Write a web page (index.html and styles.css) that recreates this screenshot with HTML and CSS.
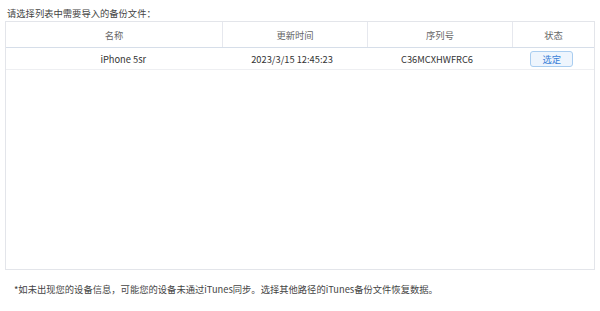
FILE: index.html
```html
<!DOCTYPE html>
<html lang="zh-CN">
<head>
  <meta charset="UTF-8">
  <title>选择备份文件</title>
  <meta name="viewport" content="width=device-width, initial-scale=1.0">
  <link rel="stylesheet" href="styles.css">
</head>
<body>
  <div class="container">
    <div class="title">请选择列表中需要导入的备份文件：</div>

    <div class="panel">
      <table class="backup-table">
        <thead>
          <tr>
            <th class="col-name">名称</th>
            <th class="col-time">更新时间</th>
            <th class="col-serial">序列号</th>
            <th class="col-state">状态</th>
          </tr>
        </thead>
        <tbody>
          <tr>
            <td class="cell-name">iPhone 5sr</td>
            <td class="cell-time">2023/3/15 12:45:23</td>
            <td class="cell-serial">C36MCXHWFRC6</td>
            <td><button class="pick-btn">选定</button></td>
          </tr>
        </tbody>
      </table>
    </div>

    <div class="note">*如未出现您的设备信息，可能您的设备未通过iTunes同步。选择其他路径的iTunes备份文件恢复数据。</div>
  </div>
</body>
</html>
```

FILE: styles.css
```css
html, body {
  margin: 0;
  padding: 0;
  width: 100%;
  height: 100%;
  overflow: hidden;
  background: #fff;
  font-family: "Noto Sans CJK SC", "Noto Sans", sans-serif;
  color: #333;
}

.container {
  padding: 6px 5px 0 5px;
  box-sizing: border-box;
}

.title {
  font-size: 9.3px;
  line-height: 14px;
  height: 15px;
  padding-left: 2px;
  color: #444;
}

.panel {
  width: 590px;
  height: 249px;
  border: 1px solid #e3e5ea;
  box-sizing: border-box;
}

.backup-table {
  width: 100%;
  border-collapse: collapse;
  table-layout: fixed;
  font-size: 9.3px;
}

.backup-table th {
  height: 25px;
  font-weight: normal;
  color: #666;
  border-bottom: 1px solid #d6dee9;
  border-right: 1px solid #e6e8ee;
  padding: 0;
}

.backup-table th:last-child {
  border-right: none;
}

.backup-table td {
  height: 21px;
  text-align: center;
  border-bottom: 1px solid #eeeff2;
  padding: 0;
  color: #333;
}

.backup-table td.cell-name { padding-left: 18px; }
.backup-table td.cell-time { padding-right: 6px; }
.backup-table td.cell-serial { padding-right: 6px; }

.col-name { width: 216px; }
.col-time { width: 144px; }
.col-serial { width: 144px; }

.pick-btn {
  width: 43px;
  height: 16px;
  padding: 0;
  margin-right: 3px;
  font-family: inherit;
  font-size: 9.3px;
  color: #3a7fd8;
  background: #eef5fd;
  border: 1px solid #a9cdf0;
  border-radius: 3px;
  cursor: pointer;
  vertical-align: middle;
}

.note {
  margin-top: 12px;
  padding-left: 9px;
  font-size: 9.3px;
  line-height: 14px;
  color: #444;
}
```
